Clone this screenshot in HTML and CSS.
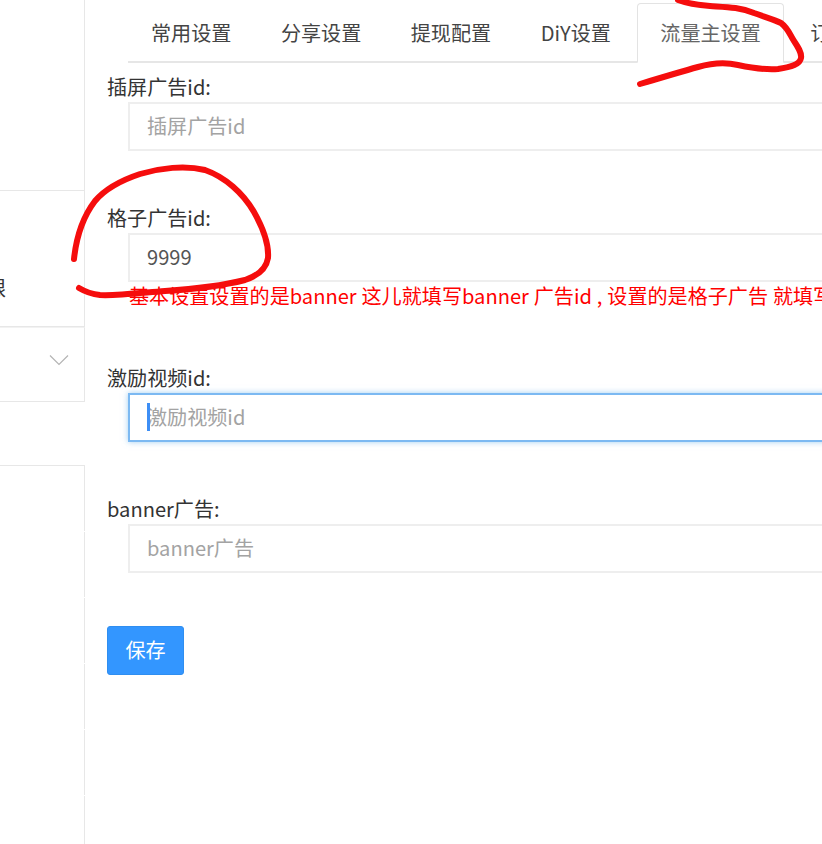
FILE: index.html
```html
<!DOCTYPE html>
<html lang="zh-CN">
<head>
    <meta charset="UTF-8">
    <title>流量主设置</title>
    <link rel="stylesheet" href="styles.css">
</head>
<body>
    <div class="page">
        <aside class="sidebar">
            <div class="side-top"></div>
            <div class="side-item"><span class="side-label">权限</span></div>
            <div class="side-select">
                <svg class="chevron" width="20" height="12" viewBox="0 0 20 12"><path d="M1 1.500L10 10.500L19 1.500" fill="none" stroke="#b4b4b4" stroke-width="1.200"/></svg>
            </div>
            <div class="side-rest">
                <div class="side-row"></div>
                <div class="side-row"></div>
                <div class="side-row"></div>
                <div class="side-row"></div>
                <div class="side-row"></div>
                <div class="side-row"></div>
            </div>
        </aside>

        <main class="main">
            <ul class="tabs">
                <li class="tab">常用设置</li>
                <li class="tab">分享设置</li>
                <li class="tab">提现配置</li>
                <li class="tab">DiY设置</li>
                <li class="tab active">流量主设置</li>
                <li class="tab">订单设置</li>
            </ul>

            <form class="form">
                <div class="form-group first">
                    <label class="form-label">插屏广告id:</label>
                    <input class="form-input" type="text" placeholder="插屏广告id">
                </div>
                <div class="form-group with-help">
                    <label class="form-label">格子广告id:</label>
                    <input class="form-input" type="text" value="9999">
                    <p class="help">基本设置设置的是banner 这儿就填写banner 广告id , 设置的是格子广告 就填写格子广告id</p>
                </div>
                <div class="form-group">
                    <label class="form-label">激励视频id:</label>
                    <div class="form-input focused"><span class="caret"></span>激励视频id</div>
                </div>
                <div class="form-group">
                    <label class="form-label">banner广告:</label>
                    <input class="form-input" type="text" placeholder="banner广告">
                </div>
                <button class="btn-save" type="button">保存</button>
            </form>
        </main>
    </div>

    <!-- red marker scribbles drawn over the screenshot -->
    <svg class="scribble" width="822" height="844" viewBox="0 0 822 844">
        <path d="M74 259C76 240 82 218 95 201C106 188 122 180 140 174C160 168 185 165 205 170C225 177 243 193 254 212C263 228 269 245 268 258C266 270 257 276 245 280C225 285 195 289 165 291C140 293 115 296 100 295C90 294 84 291 79 288"/>
        <path d="M678 0C686 3 696 5 710 6C725 7 740 7 754 13C765 17 775 20 781 23C788 28 790 35 794 41C798 47 802 53 801 58C800 64 792 67 778 69C765 70 752 68 738 65C725 62 712 63 698 67C680 72 660 78 640 84"/>
    </svg>
</body>
</html>
```

FILE: styles.css
```css
* {
    margin: 0;
    padding: 0;
    box-sizing: border-box;
}

html, body {
    width: 822px;
    height: 844px;
    overflow: hidden;
    background: #fff;
}

body {
    position: relative;
    font-family: "Noto Sans CJK SC", "Noto Sans", sans-serif;
    font-size: 20.1px;
    color: #333;
}

.page {
    display: flex;
    height: 844px;
}

.sidebar {
    width: 85px;
    flex-shrink: 0;
    overflow: hidden;
}

.side-top {
    height: 191px;
    border-right: 1px solid #e7e7e7;
    border-bottom: 1px solid #e7e7e7;
}

.side-item {
    display: flex;
    justify-content: flex-end;
    height: 136px;
    border-right: 1px solid #e7e7e7;
    border-bottom: 1px solid #e7e7e7;
    padding-top: 83px;
    padding-right: 78px;
    white-space: nowrap;
}

.side-label {
    flex-shrink: 0;
    line-height: 28px;
}

.side-select {
    height: 75px;
    border-right: 1px solid #e7e7e7;
    border-bottom: 1px solid #e7e7e7;
    border-top: 1px solid #f2f2f2;
    display: flex;
    justify-content: flex-end;
    align-items: center;
    padding-right: 15px;
    padding-bottom: 10px;
}

.side-rest {
    margin-top: 63px;
    border-top: 1px solid #e7e7e7;
}

.side-row {
    height: 65px;
    margin-bottom: 1px;
    border-right: 1px solid #e7e7e7;
}

.main {
    flex: 1;
    min-width: 0;
    padding-left: 22px;
}

.tabs {
    display: flex;
    list-style: none;
    margin-left: 21px;
    padding-top: 3px;
    width: 800px;
    height: 63px;
    border-bottom: 2px solid #e6e6e6;
}

.tab {
    height: 60px;
    padding: 0 22px;
    margin-right: 3.5px;
    border: 1px solid transparent;
    line-height: 58px;
    white-space: nowrap;
    color: #444;
    flex-shrink: 0;
}

.tab.active {
    border-color: #e3e3e3;
    border-bottom-color: #fff;
    border-radius: 4px 4px 0 0;
    background: #fff;
    color: #666;
}

.form-group {
    margin-bottom: 53px;
}

.form-group.first {
    padding-top: 10px;
}

.form-group.with-help {
    margin-bottom: 0;
}

.form-label {
    display: block;
    height: 29px;
    line-height: 27px;
    white-space: nowrap;
}

.form-input {
    display: block;
    width: 800px;
    height: 49px;
    margin-left: 21px;
    padding: 0 17px 3px;
    border: 2px solid #eee;
    outline: none;
    font: inherit;
    color: #555;
    background: #fff;
}

.form-input::placeholder {
    color: #a3a3a3;
}

.form-input.focused {
    position: relative;
    padding-bottom: 0;
    line-height: 44px;
    border-color: #7cb9f2;
    box-shadow: 0 0 6px rgba(102, 175, 233, 0.6);
    color: #a3a3a3;
}

.caret {
    position: absolute;
    left: 17px;
    top: 8px;
    width: 3px;
    height: 28px;
    background: #3d8ef5;
}

.help {
    margin-left: 22px;
    width: 900px;
    height: 82px;
    line-height: 28px;
    color: #f00;
    white-space: nowrap;
    word-spacing: 0.4px;
}

.btn-save {
    display: block;
    width: 77px;
    height: 49px;
    padding-bottom: 2px;
    border: 1px solid #2f8ef0;
    border-radius: 3px;
    background: #3396ff;
    color: #fff;
    font: inherit;
}

.scribble {
    position: absolute;
    left: 0;
    top: 0;
    pointer-events: none;
}

.scribble path {
    fill: none;
    stroke: #f50d0d;
    stroke-width: 6;
    stroke-linecap: round;
    stroke-linejoin: round;
}
```
